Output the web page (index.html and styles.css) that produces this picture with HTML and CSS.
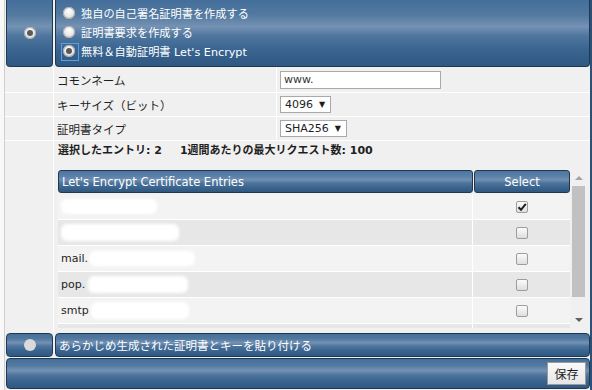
FILE: index.html
```html
<!DOCTYPE html>
<html lang="ja">
<head>
    <meta charset="UTF-8">
    <meta name="viewport" content="width=device-width, initial-scale=1.0">
    <title>SSL証明書</title>
    <link rel="stylesheet" href="styles.css">
</head>
<body>
    <div class="panel">
        <div class="bar bar-top">
            <div class="cell cell-side"><span class="radio on"></span></div>
            <div class="cell cell-main options">
                <div class="opt"><span class="radio"></span>独自の自己署名証明書を作成する</div>
                <div class="opt"><span class="radio"></span>証明書要求を作成する</div>
                <div class="opt"><span class="radio on focused"></span>無料＆自動証明書 Let's Encrypt</div>
            </div>
        </div>

        <div class="form">
            <div class="gutter"></div>
            <div class="label">コモンネーム</div>
            <div class="field"><span class="input">www.</span></div>

            <div class="gutter"></div>
            <div class="label">キーサイズ（ビット）</div>
            <div class="field"><span class="select">4096<span class="caret">▼</span></span></div>

            <div class="gutter"></div>
            <div class="label">証明書タイプ</div>
            <div class="field"><span class="select">SHA256<span class="caret">▼</span></span></div>

            <div class="gutter"></div>
            <div class="entries">
                <div class="stats">選択したエントリ: 2<span class="spacer"></span>1週間あたりの最大リクエスト数: 100</div>
                <div class="grid-box">
                    <div class="list">
                        <div class="list-head">
                            <div class="th th-name">Let's Encrypt Certificate Entries</div>
                            <div class="th th-select">Select</div>
                        </div>
                        <div class="row">
                            <div class="td-name"><span class="blot blot-1"></span></div>
                            <div class="td-select"><span class="check checked"><svg width="10" height="10" viewBox="0 0 10 10"><path d="M1.5 5.2 L4 7.8 L8.8 1.8" fill="none" stroke="#1e1e1e" stroke-width="2"/></svg></span></div>
                        </div>
                        <div class="row">
                            <div class="td-name"><span class="blot blot-2"></span></div>
                            <div class="td-select"><span class="check"></span></div>
                        </div>
                        <div class="row">
                            <div class="td-name">mail.<span class="blot blot-3"></span></div>
                            <div class="td-select"><span class="check"></span></div>
                        </div>
                        <div class="row">
                            <div class="td-name">pop.<span class="blot blot-4"></span></div>
                            <div class="td-select"><span class="check"></span></div>
                        </div>
                        <div class="row">
                            <div class="td-name">smtp<span class="blot blot-5"></span></div>
                            <div class="td-select"><span class="check"></span></div>
                        </div>
                        <div class="row">
                            <div class="td-name"></div>
                            <div class="td-select"></div>
                        </div>
                    </div>
                    <div class="scrollbar">
                        <div class="arrow"><span class="tri-up"></span></div>
                        <div class="thumb"></div>
                        <div class="track"></div>
                        <div class="arrow"><span class="tri-down"></span></div>
                    </div>
                </div>
            </div>
        </div>

        <div class="bar bar-paste">
            <div class="cell cell-side"><span class="radio off"></span></div>
            <div class="cell cell-main paste-text">あらかじめ生成された証明書とキーを貼り付ける</div>
        </div>

        <div class="bar bar-foot">
            <div class="cell cell-full">
                <button class="save">保存</button>
            </div>
        </div>
    </div>
</body>
</html>
```

FILE: styles.css
```css
* {
	box-sizing: border-box;
}

body {
	margin: 0;
	background: #f8f8f8;
	font-family: "DejaVu Sans", "Noto Sans CJK JP", sans-serif;
	font-size: 11px;
	color: #1e1e1e;
}

.panel {
	margin-left: 4px;
	width: 588px;
	height: 390px;
	border-left: 1px solid #cfcfcf;
	border-right: 2px solid #2d5176;
	background: #f0f0f0;
	display: flex;
	flex-direction: column;
}

/* blue bars */
.bar {
	display: flex;
	gap: 2px;
	padding-left: 1px;
}

.cell {
	background: linear-gradient(#446e9b 0%, #52799f 22%, #7492b4 40%, #4e759d 55%, #3a6590 75%, #2f5882 100%);
	border: 1px solid #1f3955;
	border-radius: 4px;
	color: #fff;
}

.cell-side {
	width: 47px;
	display: flex;
	justify-content: center;
	align-items: center;
}

.cell-main {
	flex: 1;
}

.bar-top {
	height: 67px;
}

.bar-top .cell {
	border-top: none;
	border-radius: 0 0 4px 4px;
	padding-bottom: 1px;
}

.options {
	padding: 3px 0 0 7px;
}

.opt {
	height: 19px;
	display: flex;
	align-items: center;
	gap: 6px;
	font-size: 11.2px;
}

.radio {
	position: relative;
	display: inline-block;
	width: 12px;
	height: 12px;
	border-radius: 50%;
	background: radial-gradient(circle at 50% 35%, #ffffff 0%, #e6e6e6 55%, #c4c4c4 100%);
	box-shadow: inset 0 0 0 1px #a9a9a9;
}

.radio.on::before {
	content: '';
	position: absolute;
	left: 3px;
	top: 3px;
	width: 6px;
	height: 6px;
	border-radius: 50%;
	background: #5a5a5a;
}

.radio.focused::after {
	content: '';
	position: absolute;
	left: -2px;
	top: -2px;
	width: 16px;
	height: 16px;
	border: 1px solid #5c9ee2;
}

.radio.off {
	background: #dadada;
	box-shadow: none;
}

/* form grid */
.form {
	display: grid;
	grid-template-columns: 48px 222px 1fr;
	grid-template-rows: 25px 23px 23px 191px;
	gap: 1px;
	background: #fff;
}

.gutter,
.label,
.field,
.entries {
	background: #f0f0f0;
}

.label {
	display: flex;
	align-items: center;
	padding-left: 3px;
	font-size: 11.5px;
}

.field {
	display: flex;
	align-items: center;
	padding-left: 3px;
}

.input {
	width: 161px;
	height: 18px;
	background: #fff;
	border: 1px solid #a9a9a9;
	padding: 1px 3px;
	line-height: 14px;
	color: #333;
}

.select {
	display: inline-flex;
	align-items: center;
	gap: 6px;
	height: 17px;
	background: #fff;
	border: 1px solid #a9a9a9;
	padding: 0 5px 0 4px;
}

.caret {
	font-size: 8px;
}

.entries {
	grid-column: 2 / 4;
	padding: 0 3px 0 4px;
}

.stats {
	height: 20px;
	line-height: 20px;
	font-weight: bold;
	margin-bottom: 9px;
}

.spacer {
	display: inline-block;
	width: 18px;
}

.grid-box {
	display: flex;
	height: 158px;
	overflow: hidden;
}

.list {
	width: 512px;
}

.list-head {
	display: flex;
	gap: 1px;
	height: 23px;
	margin-bottom: 1px;
}

.th {
	background: linear-gradient(#4b76a2 0%, #5a80a8 25%, #7190b2 42%, #4c739b 58%, #3a638d 80%, #2f577f 100%);
	border: 1px solid #24374b;
	border-radius: 3px;
	color: #fff;
	display: flex;
	align-items: center;
	font-size: 11.5px;
}

.th-name {
	width: 415px;
	padding-left: 3px;
}

.th-select {
	width: 96px;
	justify-content: center;
}

.row {
	display: flex;
	height: 26px;
	border-bottom: 1px solid #fff;
	background: #f3f3f3;
}

.row:nth-child(odd) {
	background: #e7e7e7;
}

.td-name {
	width: 415px;
	border-right: 1px solid #fff;
	display: flex;
	align-items: center;
	padding-left: 3px;
}

.td-select {
	flex: 1;
	display: flex;
	justify-content: center;
	align-items: center;
}

.blot {
	display: inline-block;
	height: 15px;
	background: #fff;
	border-radius: 6px;
	filter: blur(1.5px);
}

.blot-1 { width: 96px; }
.blot-2 { width: 118px; height: 17px; }
.blot-3 { width: 106px; margin-left: 1px; }
.blot-4 { width: 100px; height: 17px; margin-left: 3px; }
.blot-5 { width: 98px; height: 17px; margin-left: 2px; }

.check {
	width: 12px;
	height: 12px;
	border: 1px solid #9d9d9d;
	border-radius: 2px;
	background: linear-gradient(#fbfbfb, #dedede);
	display: flex;
	justify-content: center;
	align-items: center;
}

/* fake scrollbar */
.scrollbar {
	width: 17px;
	display: flex;
	flex-direction: column;
	background: #f0f0f0;
}

.arrow {
	height: 16px;
	display: flex;
	justify-content: center;
	align-items: center;
}

.tri-up,
.tri-down {
	width: 0;
	height: 0;
	border-left: 4px solid transparent;
	border-right: 4px solid transparent;
}

.tri-up {
	border-bottom: 4px solid #a3a3a3;
}

.tri-down {
	border-top: 4px solid #606060;
}

.thumb {
	height: 111px;
	margin: 0 2px 0 2px;
	background: #c1c1c1;
}

.track {
	flex: 1;
}

.bar-paste {
	margin-top: 1px;
	height: 24px;
}

.paste-text {
	display: flex;
	align-items: center;
	padding-left: 3px;
	font-size: 11.5px;
}

.bar-foot {
	margin-top: 1px;
	height: 31px;
}

.cell-full {
	flex: 1;
	display: flex;
	justify-content: flex-end;
	align-items: center;
	padding-right: 3px;
}

.save {
	width: 39px;
	height: 23px;
	background: linear-gradient(#fafafa, #e6e6e6);
	border: 1px solid #9a9a9a;
	font-family: "Noto Sans CJK JP", sans-serif;
	font-size: 12px;
	color: #1e1e1e;
	padding: 0;
}
```
